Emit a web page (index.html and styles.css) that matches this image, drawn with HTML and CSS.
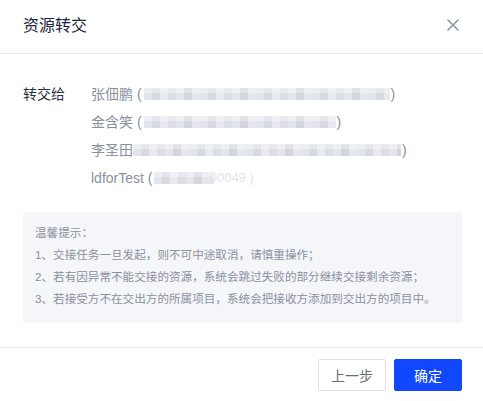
FILE: index.html
```html
<!DOCTYPE html>
<html lang="zh-CN">
<head>
<meta charset="utf-8">
<title>资源转交</title>
<link rel="stylesheet" href="styles.css">
</head>
<body>
<div class="dialog">
  <header class="dlg-head">
    <h1 class="dlg-title">资源转交</h1>
    <button class="dlg-close" aria-label="关闭">
      <svg width="12" height="12" viewBox="0 0 12 12"><path d="M1 1L11 11M11 1L1 11" stroke="#8993a8" stroke-width="1.5" stroke-linecap="round"/></svg>
    </button>
  </header>
  <main class="dlg-body">
    <div class="to-row">
      <div class="to-label">转交给</div>
      <ul class="to-list">
        <li class="person">张佃鹏 (<span class="mosaic m1"></span>)</li>
        <li class="person">金含笑 (<span class="mosaic m2"></span>)</li>
        <li class="person">李圣田 <span class="mosaic m3"></span>)</li>
        <li class="person">ldforTest (<span class="mosaic m4"></span><span class="faded">000049 )</span></li>
      </ul>
    </div>
    <div class="tips">
      <p>温馨提示：</p>
      <p>1、交接任务一旦发起，则不可中途取消，请慎重操作；</p>
      <p>2、若有因异常不能交接的资源，系统会跳过失败的部分继续交接剩余资源；</p>
      <p>3、若接受方不在交出方的所属项目，系统会把接收方添加到交出方的项目中。</p>
    </div>
  </main>
  <footer class="dlg-foot">
    <button class="btn btn-default">上一步</button>
    <button class="btn btn-primary">确定</button>
  </footer>
</div>
</body>
</html>
```
FILE: styles.css
```css
* { box-sizing: border-box; }
html, body { margin: 0; padding: 0; background: #fff; }
body {
  font-family: "Liberation Sans", "Noto Sans CJK SC", sans-serif;
  width: 483px;
  height: 401px;
  overflow: hidden;
}
.dialog { display: flex; flex-direction: column; width: 483px; }
.dlg-head {
  height: 54px;
  display: flex;
  align-items: center;
  justify-content: space-between;
  padding: 0 24px 0 23px;
  border-bottom: 1px solid #e8e9ee;
}
.dlg-title {
  margin: 0;
  font-size: 16px;
  font-weight: normal;
  color: #1d2640;
  line-height: 20px;
  padding-bottom: 1px;
}
.dlg-close {
  border: 0;
  background: none;
  padding: 0;
  width: 12px;
  height: 12px;
  display: flex;
  margin-top: -3px;
}
.dlg-body { padding: 26px 21px 0 23px; }
.to-row { display: flex; }
.to-label {
  width: 68px;
  font-size: 14px;
  color: #2a3040;
  line-height: 28px;
}
.to-list { list-style: none; margin: 0; padding: 0; }
.person {
  font-size: 14px;
  line-height: 28px;
  height: 28px;
  color: #8a909f;
  display: flex;
  align-items: center;
  white-space: nowrap;
}
.mosaic {
  display: inline-block;
  height: 12px;
  margin: 0 1px 0 2px;
  background:
    linear-gradient(180deg, rgba(255,255,255,0.35) 0 5px, rgba(255,255,255,0) 5px 12px),
    repeating-linear-gradient(90deg, #e3e5ec 0 8px, #d8dae3 8px 16px, #e9eaf0 16px 24px, #dcdee6 24px 32px, #e5e6ed 32px 40px, #d3d5df 40px 48px, #e6e7ee 48px 56px);
  filter: blur(0.6px);
}
.m1 { width: 246px; }
.m2 { width: 192px; }
.m3 { width: 268px; margin-left: 0; }
.m4 { width: 60px; margin-right: -12px; }
.faded { color: #e2e4ea; font-size: 13px; }
.tips {
  margin-top: 20px;
  background: #f5f6fa;
  border-radius: 2px;
  padding: 10px 12px 13px;
}
.tips p {
  margin: 0;
  font-family: "Liberation Sans", "Noto Sans CJK TC", sans-serif;
  font-size: 11.6px;
  line-height: 22px;
  color: #8b909d;
  white-space: nowrap;
}
.dlg-foot {
  margin-top: 24px;
  border-top: 1px solid #ebecf0;
  padding: 11px 21px 0 0;
  display: flex;
  justify-content: flex-end;
  gap: 8px;
}
.btn {
  width: 68px;
  height: 32px;
  font-family: "Liberation Sans", "Noto Sans CJK SC", sans-serif;
  font-size: 14px;
  border-radius: 2px;
  padding: 0;
}
.btn-default {
  background: #fff;
  border: 1px solid #dfe1e6;
  color: #656c80;
}
.btn-primary {
  background: #1147ff;
  border: 1px solid #1147ff;
  color: #fff;
}
```
